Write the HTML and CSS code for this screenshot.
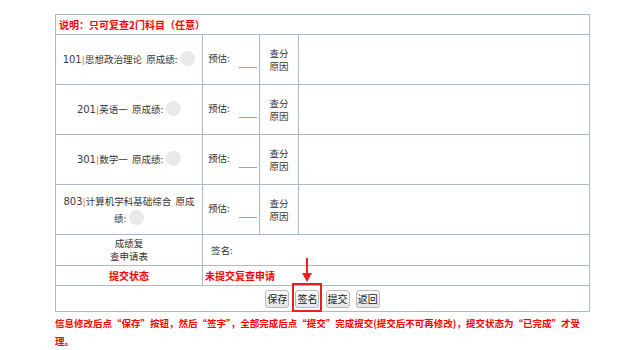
FILE: index.html
```html
<!DOCTYPE html>
<html lang="zh-CN">
<head>
  <meta charset="UTF-8">
  <title>成绩复查申请</title>
  <link rel="stylesheet" href="styles.css">
</head>
<body>

  <!-- 复查申请表 -->
  <div class="wrap">
    <table class="grid">
      <colgroup>
        <col class="c1">
        <col class="c2">
        <col class="c3">
        <col>
      </colgroup>
      <tr class="head-row">
        <td colspan="4" class="note">说明：只可复查2门科目（任意）</td>
      </tr>
      <tr class="subject-row">
        <td class="subject"><span class="code">101</span><span class="bar">|</span>思想政治理论&nbsp; 原成绩:<span class="dot"></span></td>
        <td class="guess">预估:<span class="blank"></span></td>
        <td class="reason">查分<br>原因</td>
        <td></td>
      </tr>
      <tr class="subject-row">
        <td class="subject"><span class="code">201</span><span class="bar">|</span>英语一&nbsp; 原成绩:<span class="dot"></span></td>
        <td class="guess">预估:<span class="blank"></span></td>
        <td class="reason">查分<br>原因</td>
        <td></td>
      </tr>
      <tr class="subject-row">
        <td class="subject"><span class="code">301</span><span class="bar">|</span>数学一&nbsp; 原成绩:<span class="dot"></span></td>
        <td class="guess">预估:<span class="blank"></span></td>
        <td class="reason">查分<br>原因</td>
        <td></td>
      </tr>
      <tr class="subject-row">
        <td class="subject"><span class="code">803</span><span class="bar">|</span>计算机学科基础综合&nbsp; 原成绩:<span class="dot"></span></td>
        <td class="guess">预估:<span class="blank"></span></td>
        <td class="reason">查分<br>原因</td>
        <td></td>
      </tr>
      <tr class="sign-row">
        <td class="center">成绩复<br>查申请表</td>
        <td colspan="3" class="sign">签名:</td>
      </tr>
      <tr class="status-row">
        <td class="center red">提交状态</td>
        <td colspan="3" class="red status">未提交复查申请</td>
      </tr>
      <tr class="btn-row">
        <td colspan="4" class="center">
          <button class="btn">保存</button>
          <span class="mark">
            <button class="btn">签名</button>
            <span class="arrow"></span>
          </span>
          <button class="btn">提交</button>
          <button class="btn">返回</button>
        </td>
      </tr>
    </table>
    <p class="tip">信息修改后点“保存”按钮，然后“签字”，全部完成后点“提交”完成提交(提交后不可再修改)，提交状态为“已完成”才受理。</p>
  </div>

</body>
</html>
```

FILE: styles.css
```css
body {
  margin: 0;
  padding: 0;
  background-color: #fff;
  color: #333;
  font-family: "Noto Sans CJK SC", "Noto Sans", sans-serif;
  font-size: 9.5px;
}
.wrap {
  width: 534px;
  margin: 14px 0 0 55px;
}
.grid {
  width: 535px;
  border-collapse: collapse;
  table-layout: fixed;
}
.c1 { width: 147px; }
.c2 { width: 57px; }
.c3 { width: 39px; }
.grid td {
  border: 1px solid #a7bad0;
  padding: 0;
  line-height: 13px;
}
.head-row td { height: 19px; }
.note {
  color: #f00;
  font-weight: bold;
  font-size: 10px;
  padding-left: 3px !important;
}
.subject-row td { height: 49px; }
.subject {
  text-align: center;
  padding: 0 5px !important;
  line-height: 16px !important;
}
.code {
  font-family: "DejaVu Sans", sans-serif;
  font-size: 10px;
  color: #3a3a4a;
}
.bar {
  font-family: "DejaVu Sans", sans-serif;
  color: #e07a10;
}
.dot {
  display: inline-block;
  width: 15px;
  height: 15px;
  border-radius: 50%;
  background-color: #e9e9e9;
  vertical-align: -3px;
  margin-left: 3px;
}
.guess {
  padding-left: 5px !important;
  white-space: nowrap;
}
.blank {
  display: inline-block;
  width: 18px;
  height: 1px;
  background-color: #8aa6c6;
  margin-left: 9px;
  vertical-align: -6px;
}
.reason { text-align: center; }
.sign-row td { height: 30px; }
.sign { padding-left: 8px !important; }
.status-row td { height: 19px; }
.status { padding-left: 2px !important; }
.center { text-align: center; }
.red {
  color: #f00;
  font-weight: bold;
  font-size: 10px;
}
.btn-row td { height: 25px; }
.btn {
  font-family: inherit;
  font-size: 10px;
  color: #222;
  width: 24px;
  padding: 0;
  height: 18px;
  border: 1px solid #b8b8b8;
  border-radius: 3px;
  background: linear-gradient(#fdfdfd, #e6e6e6);
  margin: 0 2px;
  vertical-align: middle;
}
.mark {
  position: relative;
  display: inline-block;
  vertical-align: middle;
}
.mark::before {
  content: "";
  position: absolute;
  left: -1px;
  right: -1px;
  top: -7px;
  bottom: -4px;
  border: 2px solid #e8211d;
}
.arrow {
  position: absolute;
  left: 13px;
  top: -32px;
  width: 2px;
  height: 16px;
  background-color: #e8211d;
}
.arrow::after {
  content: "";
  position: absolute;
  left: -4px;
  bottom: -8px;
  border-left: 5px solid transparent;
  border-right: 5px solid transparent;
  border-top: 9px solid #e8211d;
}
.tip {
  margin: 2px 0 0 0;
  color: #f00;
  font-weight: bold;
  line-height: 18px;
}
```
